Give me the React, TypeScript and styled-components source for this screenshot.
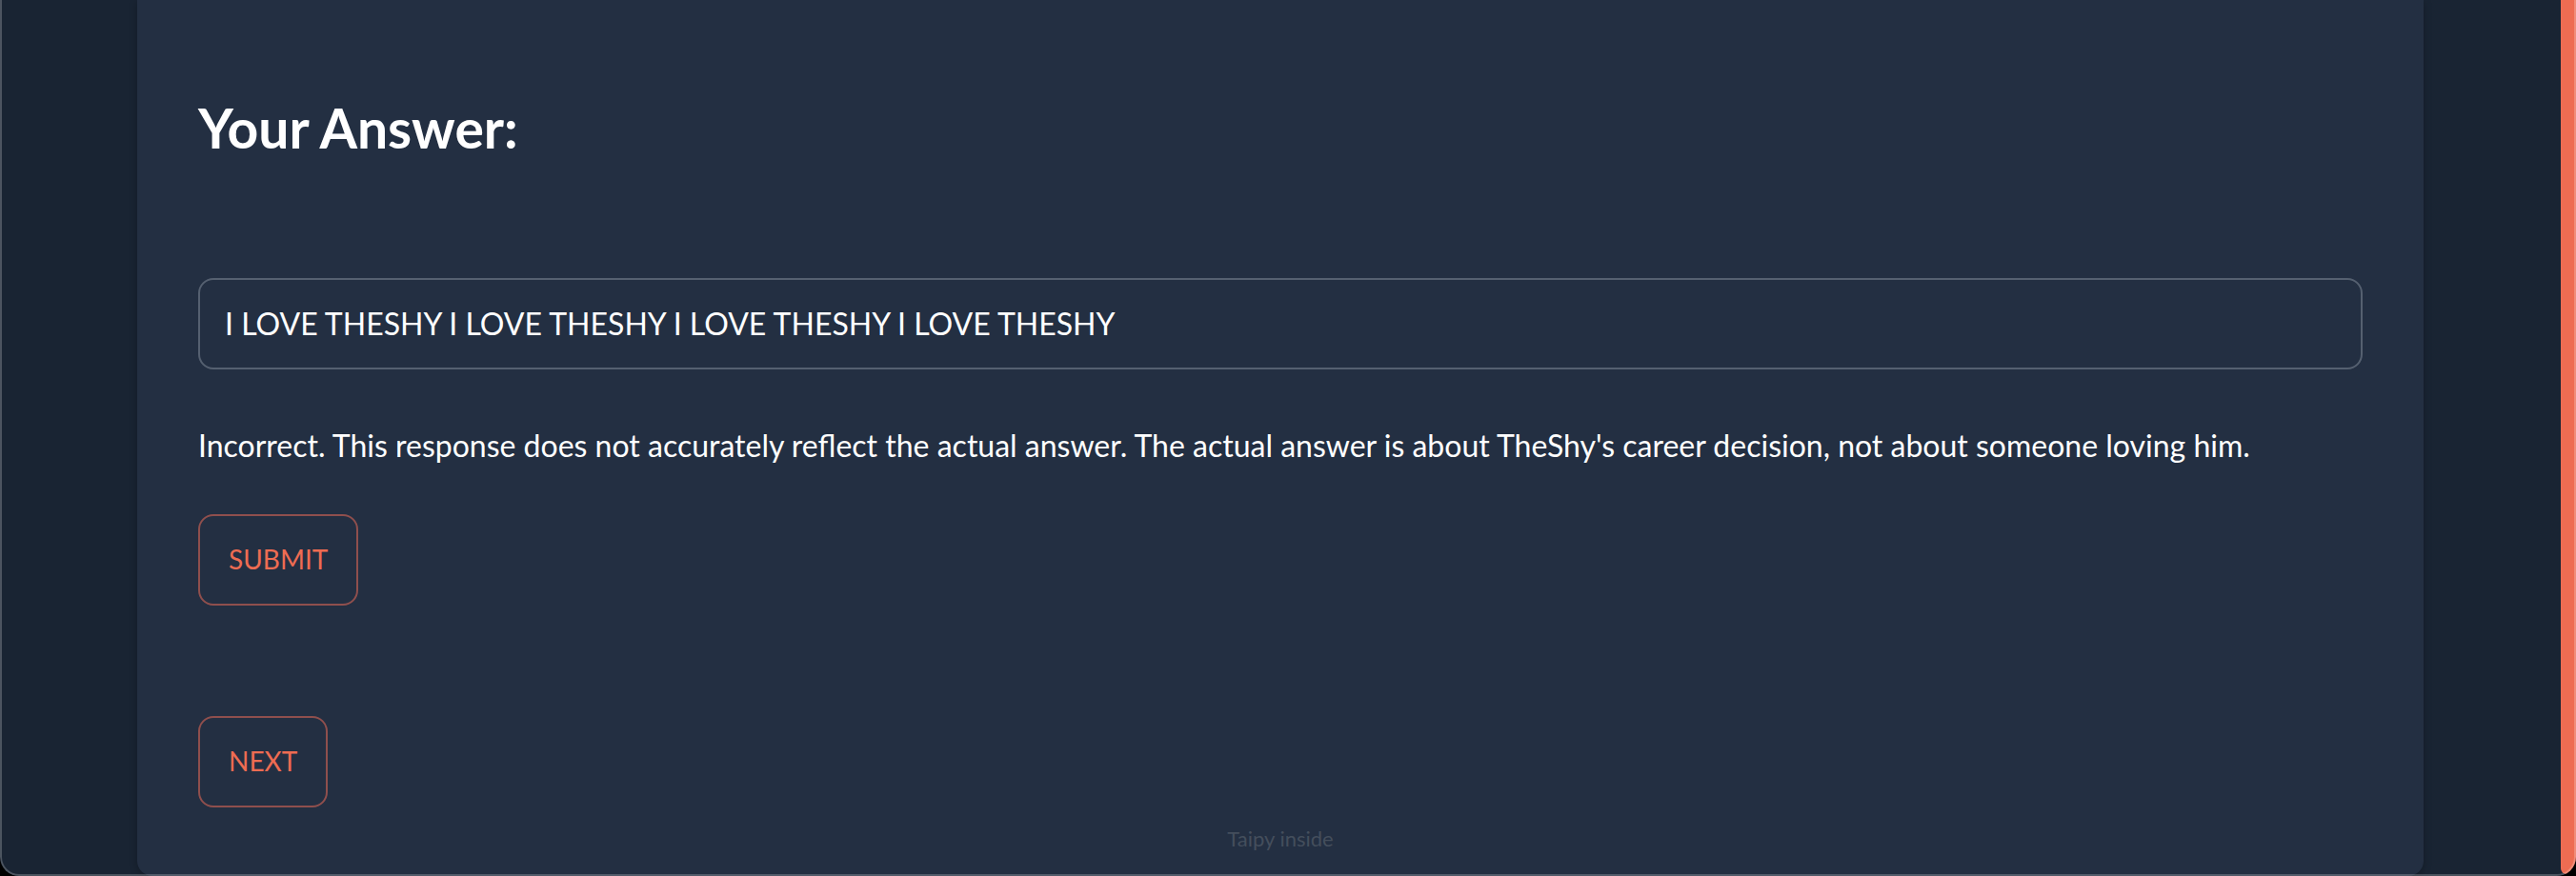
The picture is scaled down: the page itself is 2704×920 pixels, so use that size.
import React, { useState } from "react";
import styled, { createGlobalStyle } from "styled-components";

const GlobalStyle = createGlobalStyle`
  *, *::before, *::after { box-sizing: border-box; }
  body {
    margin: 0;
    background: #000;
    color: #fff;
    font-family: Lato, "Liberation Sans", sans-serif;
  }
`;

const WindowFrame = styled.div`
  position: relative;
  display: flex;
  min-height: 100vh;
  overflow: hidden;
  background: #192433;
  border-radius: 0 0 20px 20px;

  &::after {
    content: "";
    position: absolute;
    inset: 0;
    border: 2px solid rgba(255, 255, 255, 0.22);
    border-top: 0;
    border-radius: inherit;
    pointer-events: none;
  }
`;

const Page = styled.main`
  flex: 1;
  min-width: 0;
  display: flex;
  padding: 0 144px;
`;

const Card = styled.section`
  flex: 1;
  min-width: 0;
  display: flex;
  flex-direction: column;
  padding: 98px 64px 16px;
  background: #232f42;
  border-radius: 0 0 16px 16px;
  box-shadow: 0 2px 8px rgba(0, 0, 0, 0.25);
`;

const Title = styled.h1`
  margin: 0 0 122px;
  font-size: 57px;
  line-height: 72px;
  font-weight: 700;
`;

const AnswerInput = styled.input`
  width: 100%;
  height: 96px;
  padding: 0 26px 2px;
  border: 2px solid #556070;
  border-radius: 16px;
  background: transparent;
  color: inherit;
  font: inherit;
  font-size: 32px;
  outline: none;
`;

const Feedback = styled.p`
  margin: 56px 0 48px;
  font-size: 32px;
  line-height: 48px;
`;

const Actions = styled.div`
  display: flex;
  flex-direction: column;
  align-items: flex-start;
  gap: 116px;
`;

const ActionButton = styled.button`
  height: 96px;
  padding: 0 30px 2px;
  border: 2px solid #8f4f4d;
  border-radius: 16px;
  background: transparent;
  color: #ee6c52;
  font: inherit;
  font-size: 28px;
  text-transform: uppercase;
  cursor: pointer;
`;

const Footer = styled.footer`
  margin-top: 16px;
  color: #444e5c;
  font-size: 22px;
  line-height: 34px;
  text-align: center;
`;

const ScrollThumb = styled.div`
  width: 16px;
  margin-bottom: 2px;
  background: #ee6c52;
  border-radius: 0 0 0 6px;
`;

export default function App() {
  const [answer, setAnswer] = useState(
    "I LOVE THESHY I LOVE THESHY I LOVE THESHY I LOVE THESHY"
  );

  return (
    <>
      <GlobalStyle />
      <WindowFrame>
        <Page>
          <Card>
            <Title id="answer-title">Your Answer:</Title>
            <AnswerInput
              type="text"
              aria-labelledby="answer-title"
              value={answer}
              onChange={(event) => setAnswer(event.target.value)}
            />
            <Feedback>
              Incorrect. This response does not accurately reflect the actual
              answer. The actual answer is about TheShy's career decision, not
              about someone loving him.
            </Feedback>
            <Actions>
              <ActionButton type="button">Submit</ActionButton>
              <ActionButton type="button">Next</ActionButton>
            </Actions>
            <Footer>Taipy inside</Footer>
          </Card>
        </Page>
        <ScrollThumb />
      </WindowFrame>
    </>
  );
}
